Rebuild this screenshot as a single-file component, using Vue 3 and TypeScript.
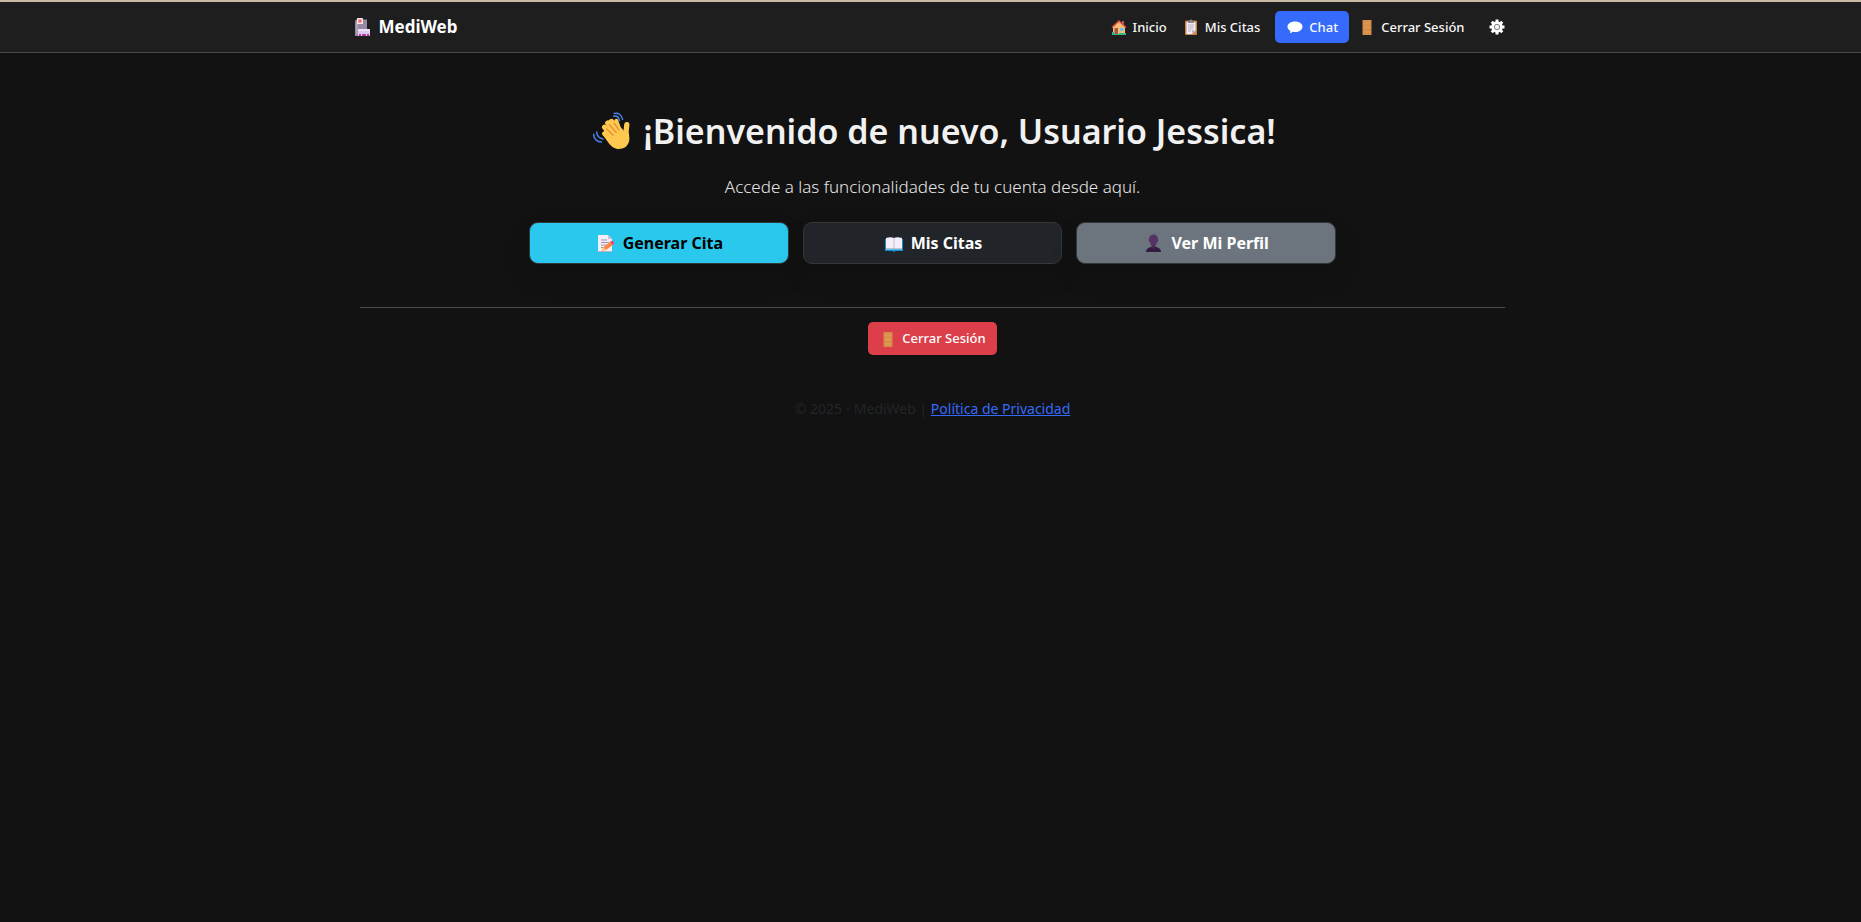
<script setup lang="ts">
import { ref } from 'vue'

type Action = { id: string; label: string; icon: string; href: string }

const userName = ref<string>('Usuario Jessica')

const actions: Action[] = [
  { id: 'create', label: 'Generar Cita', icon: 'memo', href: '#generar' },
  { id: 'list', label: 'Mis Citas', icon: 'book', href: '#citas' },
  { id: 'profile', label: 'Ver Mi Perfil', icon: 'person', href: '#perfil' },
]
</script>

<template>
  <div class="page">
    <header class="navbar">
      <div class="container bar">
        <a class="brand" href="#inicio">
          <svg class="brand-icon" viewBox="0 0 16 18" aria-hidden="true">
            <path d="M1 1.5h11V18H0V3z" fill="#958aa1" />
            <path d="M1 5h2v11H1z" fill="#aaa0b4" />
            <rect x="2" y="0" width="6" height="6" rx="1" fill="#fff0f2" />
            <path d="M5 .8v4.4M2.8 3h4.4M3.5 1.5l3 3M6.500 1.500l-3 3" stroke="#f2525d" stroke-width=".9" />
            <rect x="3" y="11" width="12" height="7" rx="1" fill="#dec9ef" />
            <rect x="3" y="11" width="12" height="2" rx="1" fill="#eee2f8" />
            <path d="M4 16h2v2H4zM7 16h4v2H7zM12 16h2v2h-2z" fill="#b53c99" />
          </svg>
          <span>MediWeb</span>
        </a>
        <nav class="links" aria-label="Principal">
          <a class="link" href="#inicio">
            <svg class="icon" viewBox="0 0 16 16" aria-hidden="true">
              <path d="M11 2h2v5h-2z" fill="#b9584b" />
              <path d="M2 8l6-6 6 6v7H2z" fill="#f3bd78" />
              <path d="M1 8.500L8 2l7 6.500" fill="none" stroke="#e34f42" stroke-width="1.600" />
              <rect x="3.500" y="9" width="3.500" height="6" fill="#9d5b42" />
              <rect x="9" y="9" width="3.500" height="3" fill="#68bde7" />
              <path d="M1 13h2v2h5v-1h7v2H1z" fill="#35b889" />
            </svg>
            <span>Inicio</span>
          </a>
          <a class="link" href="#citas">
            <svg class="icon" viewBox="0 0 16 16" aria-hidden="true">
              <rect x="2" y="1.500" width="12" height="14.500" rx="1" fill="#c98449" />
              <path d="M3.500 3h9v9l-3 3h-6z" fill="#f3edf7" />
              <path d="M12.500 11.500l-3.500 3.500v-3.500z" fill="#b9a9c5" />
              <path d="M5 2h1.500c0-2 3-2 3 0H11v2H5z" fill="#8b8792" />
              <path d="M5 6h6M5 8h6M5 10h5M5 12h3" stroke="#aaa1b2" stroke-width=".8" />
            </svg>
            <span>Mis Citas</span>
          </a>
          <a class="link chat" href="#chat">
            <svg class="icon" viewBox="0 0 16 16" aria-hidden="true">
              <path d="M8 2.500c4.200 0 7.500 2.200 7.500 5.200S12.200 13 8 13c-.8 0-1.500 0-2.200-.2-.8.800-1.900 1.300-3 1.500.5-.8.700-1.600.4-2.500C1.500 10.800.5 9.400.5 7.700.5 4.700 3.800 2.500 8 2.500z" fill="#fff" />
            </svg>
            <span>Chat</span>
          </a>
          <a class="link" href="#salir">
            <svg class="icon" viewBox="0 0 16 16" aria-hidden="true">
              <rect x="3.500" y="1" width="9" height="15" fill="#d58d48" />
              <path d="M5 2.500h6v3H5zM5 7h6v3H5zM5 11.500h6v3H5z" fill="#dc9550" />
              <circle cx="11" cy="10.500" r=".6" fill="#ad6a32" />
            </svg>
            <span>Cerrar Sesión</span>
          </a>
          <button class="settings" type="button" aria-label="Configuración">
            <svg class="icon" viewBox="0 0 16 16" aria-hidden="true">
              <circle cx="8" cy="8" r="5.800" fill="#fff" />
              <path d="M8 .5v15M.5 8h15M2.700 2.700l10.600 10.600M13.300 2.700L2.700 13.300" stroke="#fff" stroke-width="3" />
              <circle cx="8" cy="8" r="2.700" fill="#f4f4f4" stroke="#666" stroke-width=".8" />
            </svg>
          </button>
        </nav>
      </div>
    </header>

    <main class="container main">
      <h1 class="title">
        <svg class="wave" viewBox="0 0 36 36" aria-hidden="true">
          <g fill="none" stroke="#ffc94f" stroke-linecap="round">
            <path d="M17 21L11 14.500" stroke-width="5" />
            <path d="M20 19L14 10.500" stroke-width="5" />
            <path d="M23 17L17.500 9" stroke-width="5" />
            <path d="M25 17L22 8.500" stroke-width="4" />
            <path d="M31 22L32 12" stroke-width="5" />
          </g>
          <path d="M10.500 20c-1.300-2 1.500-4.200 3.300-2.500L24 12l5.500 6 4.500 2 .5 5c0 6-4.300 10-10 10-4 0-7-2.400-9.500-5.500L9.500 22z" fill="#ffc94f" />
          <path d="M10.500 20.500L18 27" stroke="#ffc94f" stroke-width="4" stroke-linecap="round" />
          <path d="M13 16l6 6M15.500 12l6.500 7.500M20 10.500l4.500 6.500" fill="none" stroke="#e28b36" stroke-width="1.200" stroke-linecap="round" />
          <path d="M20 1.500c4-1 7.500 1.500 8 5.500M19.500 4c3.200-.5 5 1.200 5.500 4M.7 21c-.3 4 3 7.500 7.300 7.500M3.500 19c.2 3.300 2.500 6 6 6.500" fill="none" stroke="#4a84ed" stroke-width="1.400" stroke-linecap="round" />
        </svg>
        <span>¡Bienvenido de nuevo, {{ userName }}!</span>
      </h1>
      <p class="subtitle">Accede a las funcionalidades de tu cuenta desde aquí.</p>

      <div class="actions">
        <a v-for="action in actions" :key="action.id" class="action" :class="action.id" :href="action.href">
          <svg v-if="action.icon === 'memo'" class="action-icon" viewBox="0 0 18 18" aria-hidden="true">
            <path d="M1 1h10l4 4v13H1z" fill="#f3eef8" />
            <path d="M11 1l4 4h-4z" fill="#c9bdd2" />
            <path d="M1 17h14v1H1z" fill="#b9b0c6" />
            <path d="M4 6h6M4 8.500h8M4 11h6M4 13.500h2" stroke="#9e93aa" />
            <path d="M5 17l1.500-4L14 7.500l2.500 3L9 16z" fill="#ff8545" />
            <path d="M5 17l1.500-4L9 16z" fill="#ffd075" />
            <path d="M13 8l1.500-1c1-.8 3.200 1.800 2.500 2.700L15.500 11z" fill="#f04478" />
          </svg>
          <svg v-else-if="action.icon === 'book'" class="action-icon" viewBox="0 0 18 18" aria-hidden="true">
            <path d="M0 5h18v12h-7l-2 1-2-1H0z" fill="#178ec9" />
            <path d="M1 4c3-1 6-1 8 0 2-1 5-1 8 0v11H1z" fill="#f4eef9" />
            <path d="M9 4v11M1 14.500h16" stroke="#b9b0c8" stroke-width=".8" />
            <path d="M1 15h16v1H1z" fill="#57bfe8" />
          </svg>
          <svg v-else class="action-icon" viewBox="0 0 18 18" aria-hidden="true">
            <path d="M1 18c0-3.500 3-5 6-5h3c3 0 6 1.500 6 5z" fill="#351b43" />
            <path d="M6.500 11h4v3l-2 1-2-1z" fill="#482654" />
            <path d="M4 5c0-6 9-6 9 0 .8 2-.2 3-1 3.300-.5 2.500-1.700 3.700-3.500 3.700S5.500 10.800 5 8.300C4.200 8 3.200 7 4 5z" fill="#573266" />
          </svg>
          <span>{{ action.label }}</span>
        </a>
      </div>

      <hr class="divider" />
      <button class="logout" type="button">
        <svg class="icon" viewBox="0 0 16 16" aria-hidden="true">
          <rect x="3.500" y="1" width="9" height="15" fill="#d58d48" />
          <path d="M5 2.500h6v3H5zM5 7h6v3H5zM5 11.500h6v3H5z" fill="#dd9853" />
        </svg>
        <span>Cerrar Sesión</span>
      </button>
    </main>

    <footer class="footer">
      © 2025 - MediWeb | <a href="#privacidad">Política de Privacidad</a>
    </footer>
  </div>
</template>

<style>
body {
  margin: 0;
  background: #121212;
}
</style>

<style scoped>
.page {
  box-sizing: border-box;
  min-height: 100vh;
  background: #121212;
  color: #f1f1f1;
  font-family: "Segoe UI", "Noto Sans", "Open Sans", sans-serif;
}

.container {
  box-sizing: border-box;
  width: 100%;
  max-width: 1152px;
  margin: 0 auto;
}

.navbar {
  border-top: 2px solid #cbb9a5;
  border-bottom: 1px solid #484848;
  background: #1e1e1e;
}

.bar {
  display: flex;
  align-items: center;
  justify-content: space-between;
  min-height: 50px;
  padding-right: 2px;
}

.brand {
  display: flex;
  align-items: center;
  gap: 8px;
  color: #fff;
  font-size: 17px;
  font-weight: 700;
  line-height: 24px;
  text-decoration: none;
}

.brand-icon {
  width: 16px;
  height: 18px;
}

.links {
  display: flex;
  align-items: center;
}

.link {
  display: flex;
  align-items: center;
  gap: 6px;
  padding: 0 8px;
  color: #f8f8f8;
  font-size: 13px;
  font-weight: 500;
  line-height: 32px;
  text-decoration: none;
  white-space: nowrap;
}

.icon {
  flex: none;
  width: 16px;
  height: 16px;
}

.chat {
  margin: 0 2px 0 7px;
  padding: 0 11px 0 12px;
  border-radius: 5px;
  background: #356afb;
}

.settings {
  display: flex;
  margin-left: 16px;
  padding: 0;
  border: 0;
  background: none;
}

.main {
  display: flex;
  flex-direction: column;
  align-items: center;
  padding: 54px 0 0 4px;
}

.title {
  display: flex;
  align-items: center;
  gap: 12px;
  margin: 0;
  padding-left: 4px;
  font-size: 34px;
  font-weight: 600;
  line-height: 48px;
}

.wave {
  flex: none;
  width: 38px;
  height: 38px;
}

.subtitle {
  margin: 18px 0 21px;
  color: #e6e6e6;
  font-size: 17px;
  font-weight: 300;
  line-height: 28px;
}

.actions {
  display: grid;
  grid-template-columns: repeat(3, 1fr);
  gap: 14px;
  width: 100%;
  max-width: 807px;
}

.action {
  display: flex;
  align-items: center;
  justify-content: center;
  gap: 8px;
  padding: 6px 0 6px 2px;
  border: 1px solid #343638;
  border-radius: 9px;
  box-shadow: 0 12px 28px rgba(0, 0, 0, 0.12);
  color: #fff;
  font-size: 16px;
  font-weight: 700;
  line-height: 28px;
  text-decoration: none;
}

.action-icon {
  flex: none;
  width: 18px;
  height: 18px;
}

.create {
  background: #2bc8ed;
  color: #000;
}

.list {
  background: #212529;
}

.profile {
  background: #6c757d;
}

.divider {
  width: 100%;
  max-width: 1145px;
  margin: 43px 0 14px;
  border: 0;
  border-top: 1px solid #4b4b4b;
}

.logout {
  display: flex;
  align-items: center;
  gap: 6px;
  padding: 0 11px 0 12px;
  border: 0;
  border-radius: 5px;
  background: #dc3f49;
  color: #fff;
  font-family: inherit;
  font-size: 13px;
  font-weight: 500;
  line-height: 33px;
}

.footer {
  padding: 44px 0 24px 4px;
  color: #212529;
  font-size: 14px;
  line-height: 20px;
  text-align: center;
}

.footer a {
  color: #356afb;
}
</style>
